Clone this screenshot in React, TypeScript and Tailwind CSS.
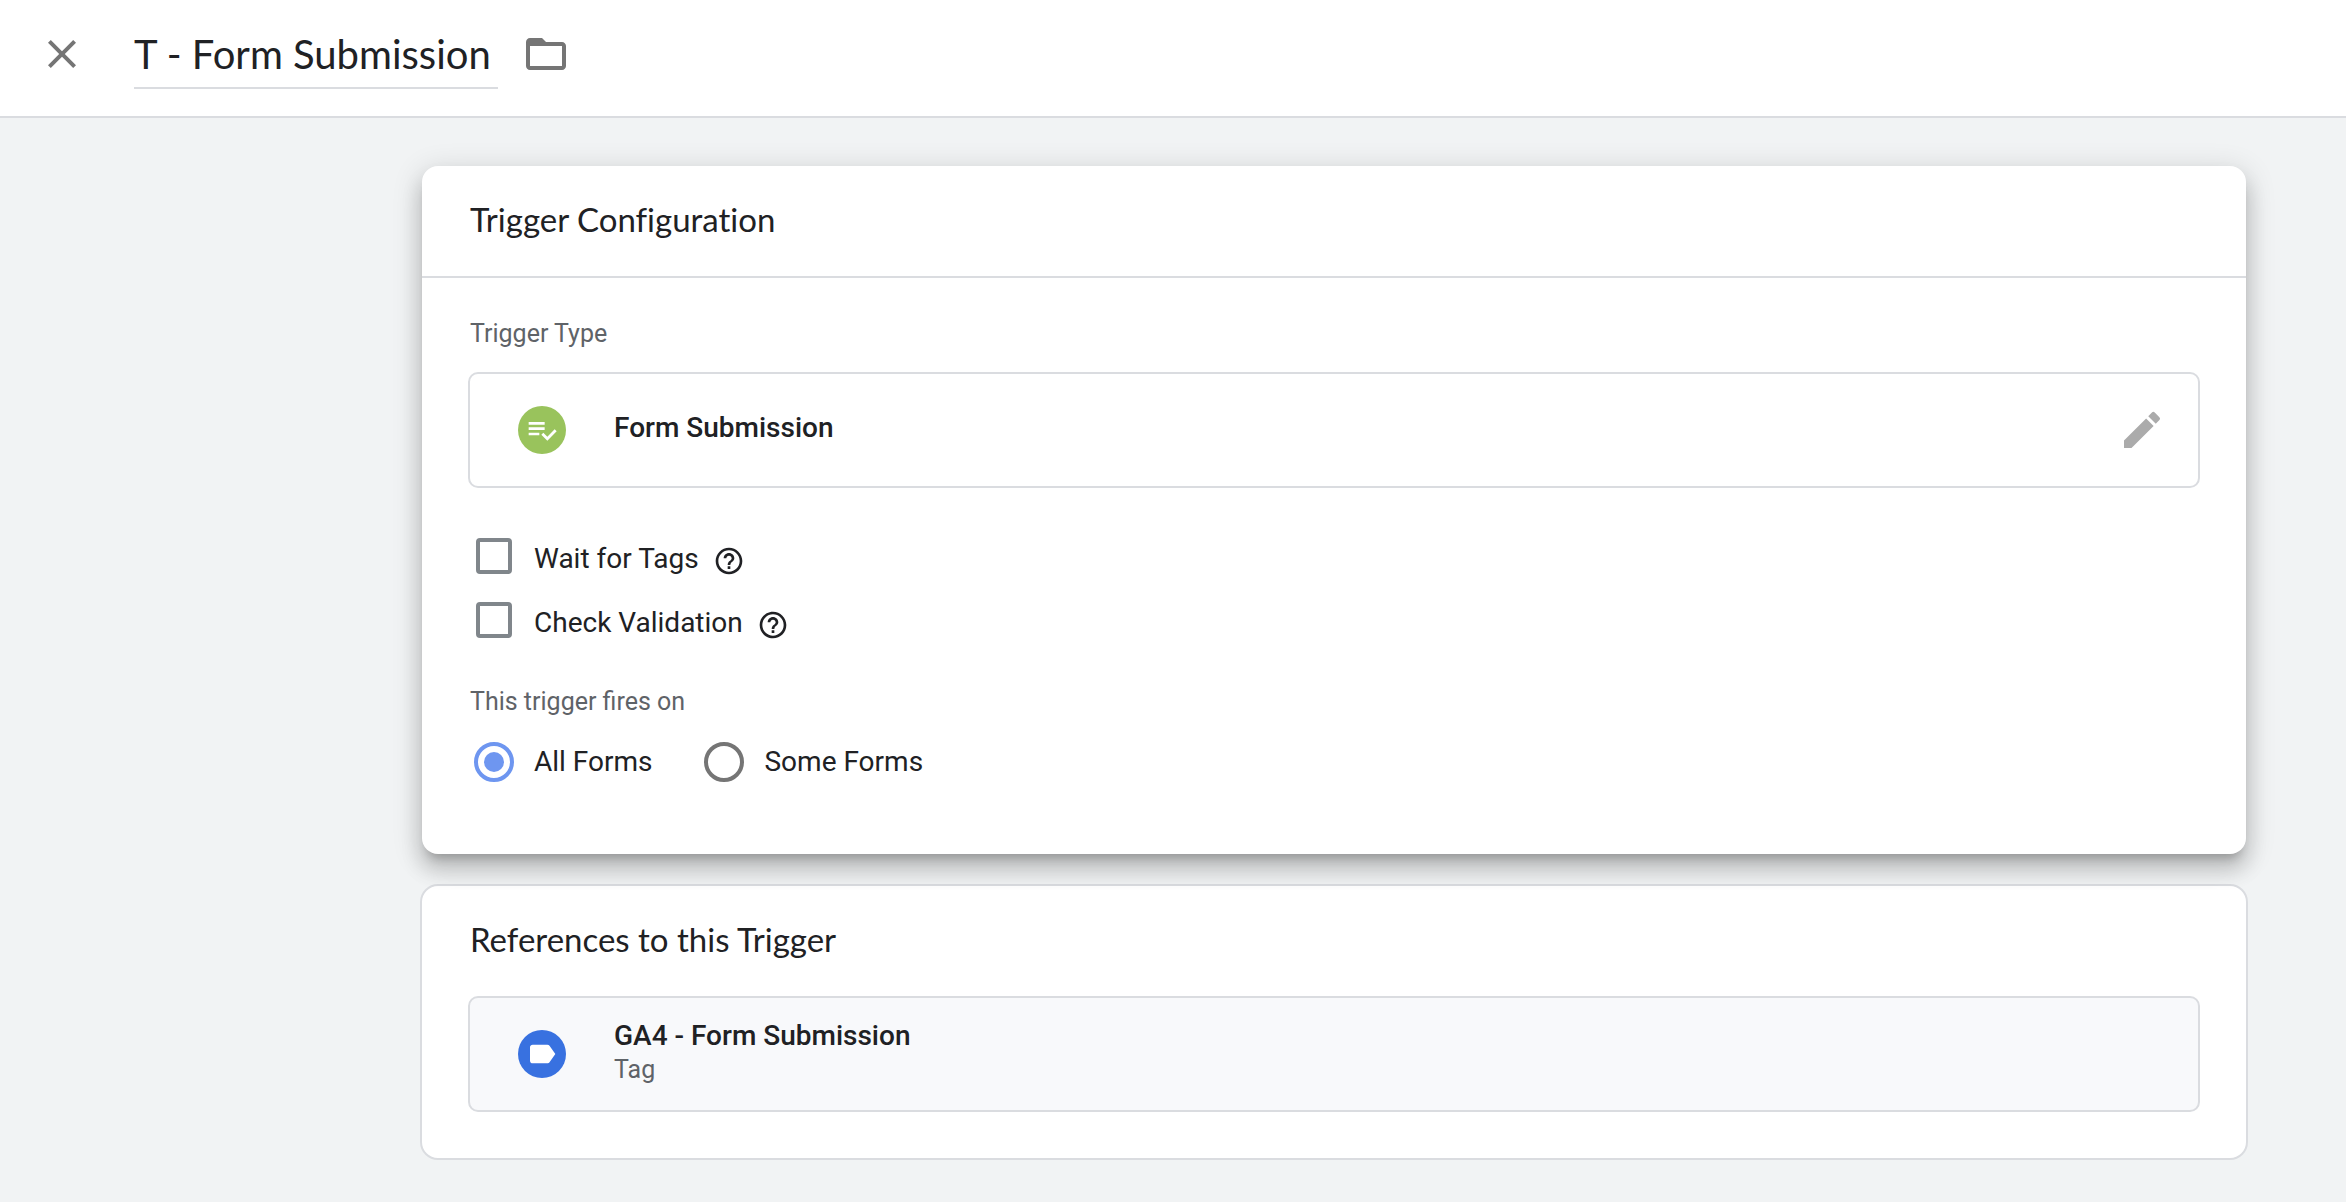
import React, { useState } from 'react';
import { MdClose, MdEdit, MdFolderOpen, MdHelpOutline, MdLabel } from 'react-icons/md';

const checkOptions = [
    { id: 'wait-for-tags', label: 'Wait for Tags' },
    { id: 'check-validation', label: 'Check Validation' },
];

const fireOptions = ['All Forms', 'Some Forms'];

const FormTriggerIcon = () => (
    <span className="flex size-12 shrink-0 items-center justify-center rounded-full bg-[#99c35c] text-white">
        <svg viewBox="0 0 24 24" fill="currentColor" className="size-8">
            <path d="M14 10H2v2h12v-2zm0-4H2v2h12V6zM2 16h8v-2H2v2zm19.5-4.5L23 13l-6.99 7-4.51-4.5L13 14l3.01 3 5.49-5.5z" />
        </svg>
    </span>
);

const Header = () => {
    const [name, setName] = useState('T - Form Submission');

    return (
        <header className="flex items-center border-b-2 border-[#dadce0] bg-white pt-[19px] pr-6 pb-[27px] pl-[38px] text-[#757575]">
            <button aria-label="Close" className="mr-12">
                <MdClose className="size-12" />
            </button>
            <input
                aria-label="Trigger name"
                value={name}
                onChange={(e) => setName(e.target.value)}
                className="mr-6 h-[70px] w-[364px] border-b-2 border-[#dadce0] pt-0.5 font-['Lato',sans-serif] text-[40px] text-[#202124] outline-none"
            />
            <button aria-label="Move to folder">
                <MdFolderOpen className="size-12" />
            </button>
        </header>
    );
};

const TriggerConfiguration = () => {
    const [checked, setChecked] = useState<Record<string, boolean>>({});
    const [firesOn, setFiresOn] = useState('All Forms');

    const toggle = (id: string) => {
        setChecked(prev => ({ ...prev, [id]: !prev[id] }));
    };

    return (
        <section className="relative z-10 mx-0.5 rounded-2xl bg-white shadow-[0_10px_10px_-6px_rgba(0,0,0,0.2),0_16px_20px_2px_rgba(0,0,0,0.14),0_6px_28px_4px_rgba(0,0,0,0.12)]">
            <div className="border-b-2 border-[#dadce0] px-12 pt-[33px] pb-[37px]">
                <h2 className="font-['Lato',sans-serif] text-[33px] leading-10 [font-variant-ligatures:none]">Trigger Configuration</h2>
            </div>

            <div className="px-[46px] pt-10 pb-[72px]">
                <h3 className="px-0.5 text-[25px] leading-8 text-[#5f6368]">Trigger Type</h3>
                <div className="mt-[22px] flex h-[116px] items-center gap-12 rounded-[10px] border-2 border-[#dadce0] pr-8 pl-12">
                    <FormTriggerIcon />
                    <span className="flex-1 pb-1 text-[28px] leading-9 font-medium">Form Submission</span>
                    <button aria-label="Edit trigger type" className="text-[#ababab]">
                        <MdEdit className="size-12" />
                    </button>
                </div>

                <div className="mt-9">
                    {checkOptions.map((option) => (
                        <div key={option.id} className="flex h-16 items-center pl-2">
                            <input
                                id={option.id}
                                type="checkbox"
                                checked={!!checked[option.id]}
                                onChange={() => toggle(option.id)}
                                className="size-9 appearance-none rounded border-4 border-[#80868b] checked:bg-[#80868b]"
                            />
                            <label htmlFor={option.id} className="pt-1.5 pl-[22px] text-[28px] leading-10">
                                {option.label}
                            </label>
                            <button aria-label={`About ${option.label}`} className="mt-2.5 ml-3.5">
                                <MdHelpOutline className="size-8" />
                            </button>
                        </div>
                    ))}
                </div>

                <fieldset className="mt-[34px]">
                    <legend className="px-0.5 text-[25px] leading-8 text-[#5f6368]">This trigger fires on</legend>
                    <div className="mt-6 flex gap-[52px] pl-1.5">
                        {fireOptions.map((option) => (
                            <label key={option} className="flex items-center gap-5 text-[28px] leading-10">
                                <input
                                    type="radio"
                                    name="fires-on"
                                    checked={firesOn === option}
                                    onChange={() => setFiresOn(option)}
                                    className="flex size-10 appearance-none items-center justify-center rounded-full border-4 border-[#757575] checked:border-[#6e96f0] checked:before:size-5 checked:before:rounded-full checked:before:bg-[#6e96f0]"
                                />
                                {option}
                            </label>
                        ))}
                    </div>
                </fieldset>
            </div>
        </section>
    );
};

const References = () => (
    <section className="mt-[30px] rounded-[18px] border-2 border-[#dadce0] bg-white px-[46px] pt-[33px] pb-[46px]">
        <h2 className="px-0.5 font-['Lato',sans-serif] text-[33px] leading-10">References to this Trigger</h2>
        <div className="mt-[37px] flex h-[116px] items-center gap-12 rounded-[10px] border-2 border-[#dadce0] bg-[#f8f9fb] pr-8 pl-12">
            <span className="flex size-12 shrink-0 items-center justify-center rounded-full bg-[#3871e0] text-white">
                <MdLabel className="size-8" />
            </span>
            <div className="flex-1 pb-1">
                <p className="text-[28px] leading-9 font-medium">GA4 - Form Submission</p>
                <p className="text-[25px] leading-8 text-[#5f6368]">Tag</p>
            </div>
        </div>
    </section>
);

const App = () => (
    <div className="min-h-screen bg-[#f1f3f4] font-['Roboto',sans-serif] text-[#202124]">
        <Header />
        <main className="pt-12 pr-[98px] pb-8 pl-[420px]">
            <TriggerConfiguration />
            <References />
        </main>
    </div>
);

export default App;
